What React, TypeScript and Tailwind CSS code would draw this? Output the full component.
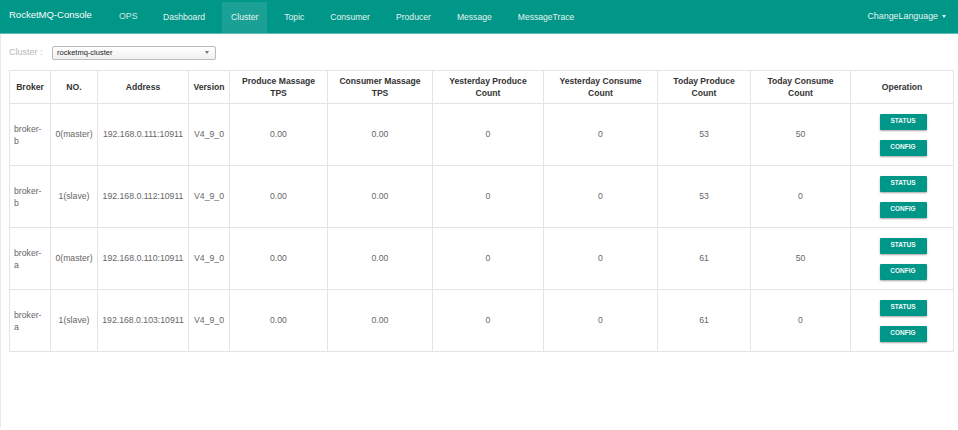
import React from "react";

const navItems = ["Dashboard", "Cluster", "Topic", "Consumer", "Producer", "Message", "MessageTrace"];

const cols = [
    { title: ["Broker"], w: "w-[41px]" },
    { title: ["NO."], w: "w-[47px]" },
    { title: ["Address"], w: "w-[91px]" },
    { title: ["Version"], w: "w-[41px]" },
    { title: ["Produce Massage", "TPS"], w: "w-[98px]" },
    { title: ["Consumer Massage", "TPS"], w: "w-[105px]" },
    { title: ["Yesterday Produce", "Count"], w: "w-[111px]" },
    { title: ["Yesterday Consume", "Count"], w: "w-[114px]" },
    { title: ["Today Produce", "Count"], w: "w-[93px]" },
    { title: ["Today Consume", "Count"], w: "w-[100px]" },
    { title: ["Operation"], w: "w-[103px]" },
];

const rows = [
    { broker: "b", no: "0(master)", addr: "192.168.0.111:10911", today: "53", todayC: "50" },
    { broker: "b", no: "1(slave)", addr: "192.168.0.112:10911", today: "53", todayC: "0" },
    { broker: "a", no: "0(master)", addr: "192.168.0.110:10911", today: "61", todayC: "50" },
    { broker: "a", no: "1(slave)", addr: "192.168.0.103:10911", today: "61", todayC: "0" },
];

const Btn = ({ label }: { label: string }) => (
    <button className="w-[47px] h-[16px] bg-[#009688] text-[#f2fbfa] text-[6.5px] font-bold rounded-[1px] shadow-[0_1px_2px_rgba(0,0,0,0.35)] leading-none">
        {label}
    </button>
);

export default function App() {
    return (
        <div className="w-[958px] h-[430px] bg-white text-[#666]" style={{ fontFamily: '"Liberation Sans", Arial, sans-serif' }}>
            {/* Navbar */}
            <div className="h-[34px] bg-[#009688] border-b border-[#5fbdb3] flex items-stretch">
                <div className="pl-[9px] w-[119px] flex items-center text-white text-[9.5px] pb-[2px]">RocketMQ-Console</div>
                <div className="w-[31px] flex items-start pt-[10px] text-[#cfe9e6] text-[8.8px]">OPS</div>
                <div className="flex items-stretch pt-[2px]">
                    {navItems.map((n) =>
                        n === "Cluster" ? (
                            <div key={n} className="flex items-center px-[9px] mx-[4px] bg-[#1aa094] text-[8.6px] text-[#e6f4f2]">
                                {n}
                            </div>
                        ) : (
                            <div key={n} className="flex items-center px-[13px] text-[8.6px] text-[#e6f4f2]">
                                {n}
                            </div>
                        )
                    )}
                </div>
                <div className="ml-auto pr-[12px] flex items-center text-[#e6f4f2] text-[8.9px]">
                    ChangeLanguage
                    <span className="ml-[4px] inline-block w-0 h-0 border-l-[2.5px] border-r-[2.5px] border-t-[3px] border-l-transparent border-r-transparent border-t-[#e6f4f2]" />
                </div>
            </div>

            {/* Content */}
            <div className="border-l border-[#e8e8e8] h-[393px] pl-[8px] pr-[5px]">
                <div className="flex items-center h-[35px] pt-[2px]">
                    <span className="text-[9px] text-[#b8b8b8] w-[43px]">Cluster :</span>
                    <div className="w-[164px] h-[14px] border border-[#bbb] rounded-[2px] bg-gradient-to-b from-white to-[#f0f0f0] flex items-center pl-[4px] pr-[6px]">
                        <span className="text-[7.5px] text-[#222]">rocketmq-cluster</span>
                        <span className="ml-auto inline-block w-0 h-0 border-l-[2px] border-r-[2px] border-t-[3px] border-l-transparent border-r-transparent border-t-[#777]" />
                    </div>
                </div>

                <table className="table-fixed border-collapse w-[944px] mt-[1px]">
                    <thead>
                        <tr className="h-[33px]">
                            {cols.map((c, i) => (
                                <th key={i} className={c.w + " border border-[#e4e4e4] text-[#333] font-bold text-[8.6px] leading-[12px] text-center align-middle px-[2px]"}>
                                    {c.title.map((t, j) => (
                                        <div key={j}>{t}</div>
                                    ))}
                                </th>
                            ))}
                        </tr>
                    </thead>
                    <tbody>
                        {rows.map((r, i) => (
                            <tr key={i} className="h-[62px] text-[8.7px]">
                                <td className="border border-[#e4e4e4] pl-[4px] align-middle leading-[12px]">
                                    broker-
                                    <br />
                                    {r.broker}
                                </td>
                                <td className="border border-[#e4e4e4] text-center">{r.no}</td>
                                <td className="border border-[#e4e4e4] text-center whitespace-nowrap">{r.addr}</td>
                                <td className="border border-[#e4e4e4] text-center">V4_9_0</td>
                                <td className="border border-[#e4e4e4] text-center">0.00</td>
                                <td className="border border-[#e4e4e4] text-center">0.00</td>
                                <td className="border border-[#e4e4e4] text-center">0</td>
                                <td className="border border-[#e4e4e4] text-center">0</td>
                                <td className="border border-[#e4e4e4] text-center">{r.today}</td>
                                <td className="border border-[#e4e4e4] text-center">{r.todayC}</td>
                                <td className="border border-[#e4e4e4]">
                                    <div className="flex flex-col items-center gap-[10px] pl-[2px]">
                                        <Btn label="STATUS" />
                                        <Btn label="CONFIG" />
                                    </div>
                                </td>
                            </tr>
                        ))}
                    </tbody>
                </table>
            </div>
        </div>
    );
}
